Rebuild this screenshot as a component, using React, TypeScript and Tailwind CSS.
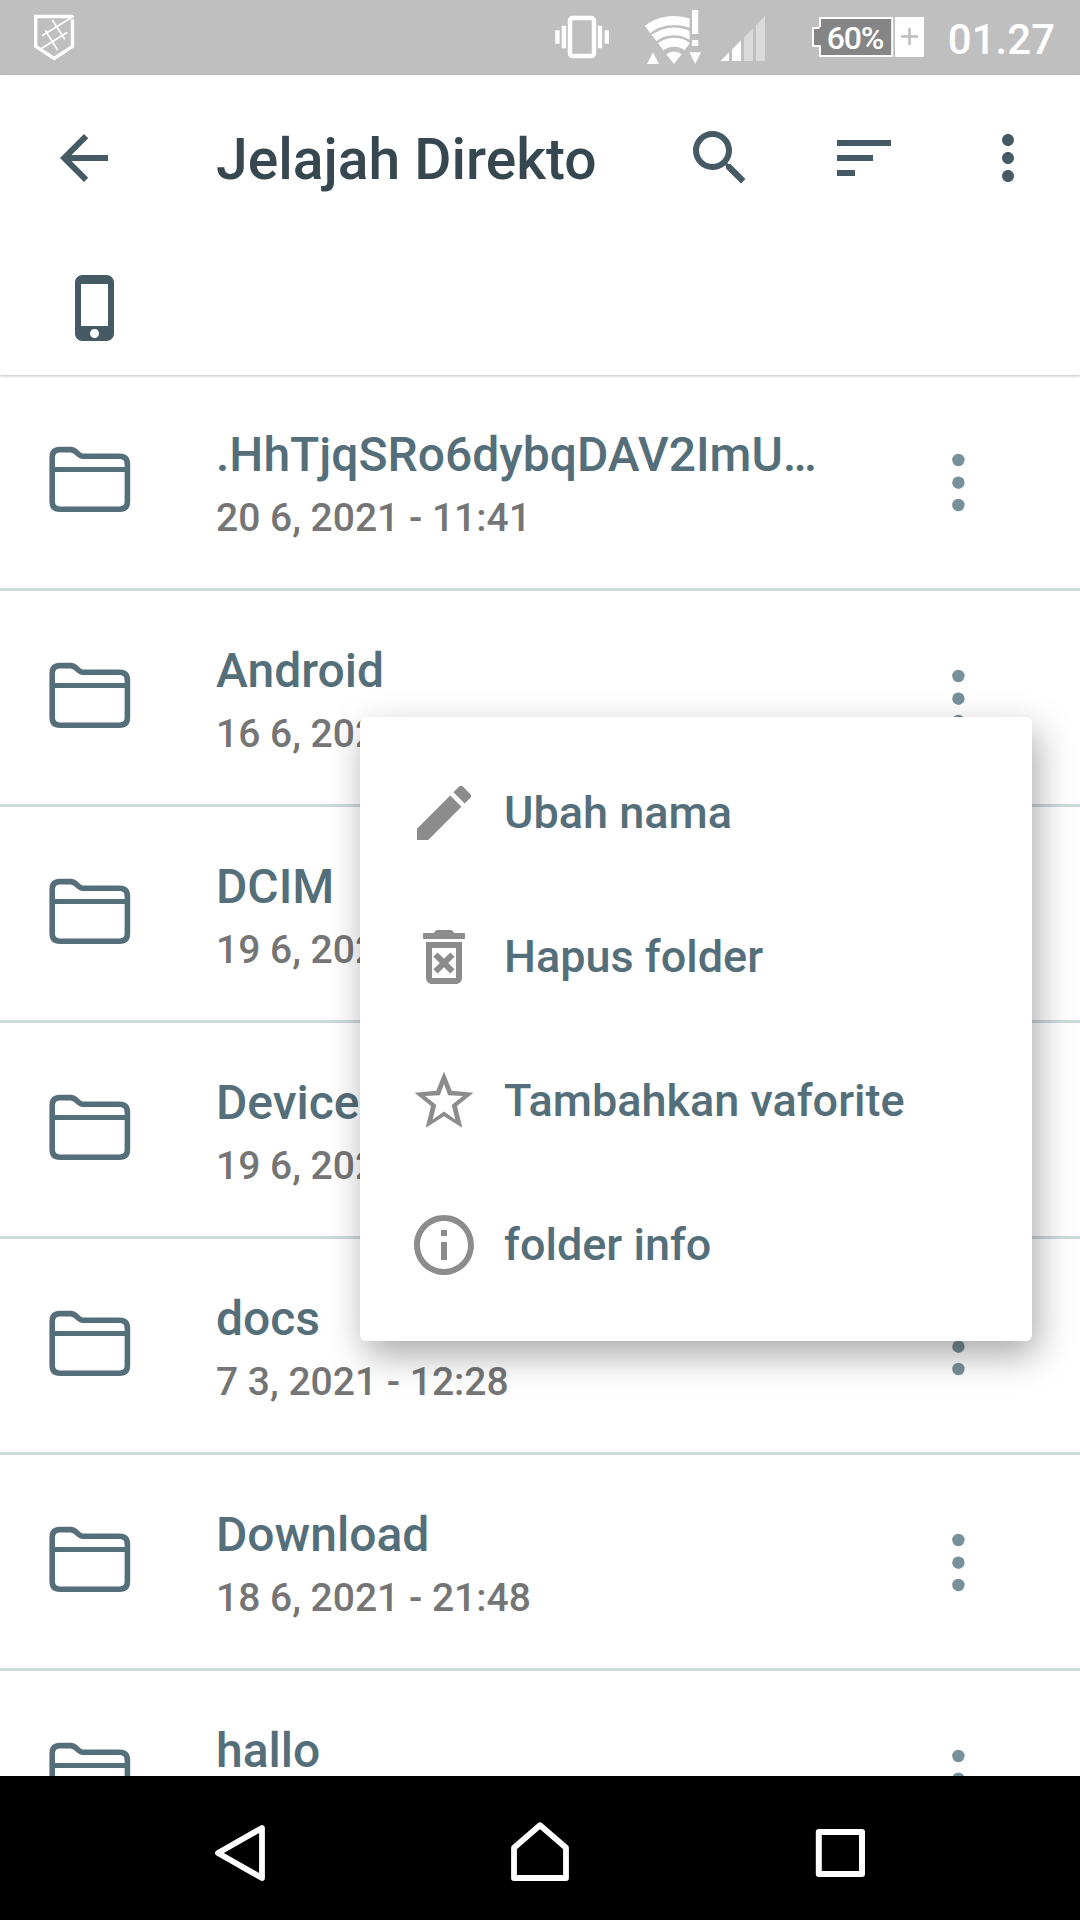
import React from "react";

const FONT = "font-['Roboto','Liberation_Sans',sans-serif]";

type Entry = { name: string; date: string };

const entries: Entry[] = [
  { name: ".HhTjqSRo6dybqDAV2ImU…", date: "20 6, 2021 - 11:41" },
  { name: "Android", date: "16 6, 2021 - 13:20" },
  { name: "DCIM", date: "19 6, 2021 - 10:05" },
  { name: "Device", date: "19 6, 2021 - 10:05" },
  { name: "docs", date: "7 3, 2021 - 12:28" },
  { name: "Download", date: "18 6, 2021 - 21:48" },
  { name: "hallo", date: "" },
];

function Icon({ d, className = "" }: { d: string; className?: string }) {
  return (
    <svg viewBox="0 0 24 24" className={`size-[72px] shrink-0 ${className}`} fill="currentColor">
      <path d={d} />
    </svg>
  );
}

const ARROW = "M20 11H7.83l5.59-5.59L12 4l-8 8 8 8 1.41-1.41L7.83 13H20v-2z";
const SEARCH =
  "M15.5 14h-.79l-.28-.27A6.471 6.471 0 0 0 16 9.5 6.5 6.5 0 1 0 9.5 16c1.61 0 3.09-.59 4.23-1.57l.27.28v.79l5 4.99L20.49 19l-4.99-5zm-6 0C7.01 14 5 11.99 5 9.5S7.01 5 9.5 5 14 7.01 14 9.5 11.99 14 9.5 14z";
const SORT = "M3 18h6v-2H3v2zM3 6v2h18V6H3zm0 7h12v-2H3v2z";
const MORE =
  "M12 8c1.1 0 2-.9 2-2s-.9-2-2-2-2 .9-2 2 .9 2 2 2zm0 2c-1.1 0-2 .9-2 2s.9 2 2 2 2-.9 2-2-.9-2-2-2zm0 6c-1.1 0-2 .9-2 2s.9 2 2 2 2-.9 2-2-.9-2-2-2z";
const PHONE =
  "M15.5 1h-8C6.12 1 5 2.12 5 3.5v17C5 21.88 6.12 23 7.5 23h8c1.38 0 2.5-1.12 2.5-2.5v-17C18 2.12 16.88 1 15.5 1zm-4 21c-.83 0-1.5-.67-1.5-1.5s.67-1.5 1.5-1.5 1.5.67 1.5 1.5-.67 1.5-1.5 1.5zm4.5-4H7V4h9v14z";
const EDIT =
  "M3 17.25V21h3.75L17.81 9.94l-3.75-3.75L3 17.25zM20.71 7.04a.996.996 0 0 0 0-1.41l-2.34-2.34a.996.996 0 0 0-1.41 0l-1.83 1.83 3.75 3.75 1.83-1.83z";
const TRASH =
  "M14.12 10.47 12 12.59l-2.13-2.12-1.41 1.41L10.59 14l-2.12 2.12 1.41 1.41L12 15.41l2.12 2.12 1.41-1.41L13.41 14l2.12-2.12-1.41-1.41zM15.5 4l-1-1h-5l-1 1H5v2h14V4h-3.5zM6 19c0 1.1.9 2 2 2h8c1.1 0 2-.9 2-2V7H6v12zM8 9h8v10H8V9z";
const INFO =
  "M11 7h2v2h-2zm0 4h2v6h-2zm1-9C6.48 2 2 6.48 2 12s4.48 10 10 10 10-4.48 10-10S17.52 2 12 2zm0 18c-4.41 0-8-3.59-8-8s3.59-8 8-8 8 3.59 8 8-3.59 8-8 8z";

function Star() {
  return (
    <svg viewBox="0 0 72 72" className="size-[72px] shrink-0" fill="currentColor" fillRule="evenodd">
      <path d="M36 6.5 43.7 25.7 65.5 27.7 49 41 54.3 62.8 36 51.3 17.7 62.8 23 41 6.5 27.7 28.3 25.7ZM36 19 31.8 30.3 17.2 31 28.3 40 24.6 54.8 36 46.6 47.4 54.8 43.7 40 54.8 31 40.2 30.3Z" />
    </svg>
  );
}

function StatusBar() {
  return (
    <header className="flex h-[75px] shrink-0 items-center justify-between bg-[#bfbfbf] pl-[34px] pr-[25px] text-white">
      <svg viewBox="34 0 42 75" className="h-[75px] w-[42px]" fill="none" stroke="#fff">
        <path d="M73 16.5H35.7V46.3L54.2 58.5 72.5 46.3V19.5" strokeWidth="3.4" />
        <path d="M74 16 42 35.7M67.5 32.3 40.6 49M52.3 20 64.7 39.3M45.3 30.3 57.5 50" strokeWidth="1.7" />
      </svg>
      <div className="flex items-center">
        <svg viewBox="552 0 220 75" className="h-[75px] w-[220px]" fill="#fff">
          <rect x="570" y="18" width="24" height="38" rx="2.5" fill="none" stroke="#fff" strokeWidth="4.4" />
          <path d="M561.8 25.8h4.4v22.4h-4.4zM555.2 30.2h4.4v13.6h-4.4zM597.8 25.8h4.4v22.4h-4.4zM604.6 30.2h4.4v13.6h-4.4z" />
          <clipPath id="wifi">
            <path d="M674 64 644.8 26 630 0H689.5V43.8Z" />
          </clipPath>
          <g clipPath="url(#wifi)">
            <g fill="none" stroke="#fff">
              <circle cx="674" cy="64" r="43.5" strokeWidth="9" />
              <circle cx="674" cy="64" r="32.6" strokeWidth="7.8" />
              <circle cx="674" cy="64" r="21.8" strokeWidth="9" />
            </g>
          </g>
          <path d="M674 64 666.4 54.2A12.4 12.4 0 0 1 681.6 54.2Z" />
          <path d="M653 52.3 659 64H647ZM689.5 52.3H701L695.2 64ZM692 10h6.2v24H692zM692 40h6.2v6H692z" />
          <path d="M720.4 61 729 52.4V61ZM732 49.4 741 40.4V61H732Z" />
          <path d="M744 37.4 753 28.3V61H744ZM756 25.2 765 16V61H756Z" fill="#dadada" />
        </svg>
        <div className="relative ml-[40px] h-[75px] w-[112px]">
          <svg viewBox="812 0 112 75" className="h-[75px] w-[112px]">
            <path d="M820 18H892.2V56H820V46H813V28H818.5L820 26Z" fill="#858585" stroke="#fff" strokeWidth="2" strokeLinejoin="round" />
            <rect x="895" y="17" width="29" height="40" rx="1" fill="#fff" />
            <path d="M909.5 28V45M901 36.5H918" stroke="#bfbfbf" strokeWidth="2.6" />
          </svg>
          <span className="absolute top-[20px] left-[15px] text-[32px] leading-[36px] font-medium tracking-[-1.2px]">60%</span>
        </div>
        <span className="mt-[3px] ml-[24px] text-[42px] leading-[75px] font-medium">01.27</span>
      </div>
    </header>
  );
}

function FolderRow({ name, date }: Entry) {
  return (
    <li className="flex h-[216px] shrink-0 border-b-[3px] border-[#cfd8dc] pl-[48px]">
      <svg viewBox="48 446 84 68" className="mt-[71px] h-[68px] w-[84px]" fill="none" stroke="#546e7a" strokeWidth="5.6">
        <path d="M60 449.6H70.5C77 449.6 77.5 456.2 83 456.2H119.5Q127.4 456.2 127.4 464V501.5Q127.4 509.2 119.5 509.2H60Q52.2 509.2 52.2 501.5V457.5Q52.2 449.6 60 449.6Z" />
        <path d="M53 469.5H127" strokeWidth="5" />
      </svg>
      <div className="ml-[84px] w-[620px] pt-[52px] font-medium whitespace-nowrap">
        <p className="text-[48px] leading-[56px] text-[#546e7a]">{name}</p>
        {date && <p className="mt-[12px] text-[39px] leading-[46px] text-[#757575]">{date}</p>}
      </div>
      <svg viewBox="0 0 16 72" className="mt-[71px] ml-[114px] h-[72px] w-[16px]" fill="#78909c">
        <circle cx="8.4" cy="14" r="6.2" />
        <circle cx="8.4" cy="36.7" r="6.2" />
        <circle cx="8.4" cy="59" r="6.2" />
      </svg>
    </li>
  );
}

function ContextMenu() {
  const items = [
    { label: "Ubah nama", icon: <Icon d={EDIT} /> },
    { label: "Hapus folder", icon: <Icon d={TRASH} /> },
    { label: "Tambahkan vaforite", icon: <Star /> },
    { label: "folder info", icon: <Icon d={INFO} /> },
  ];
  return (
    <ul className="absolute left-[360px] top-[717px] w-[672px] rounded-[6px] bg-white py-6 shadow-[5px_14px_36px_rgba(0,0,0,0.34)]">
      {items.map((it) => (
        <li key={it.label} className="flex h-[144px] items-center gap-6 pl-12 text-[#8c8c8c]">
          {it.icon}
          <span className="text-[45px] leading-[54px] font-medium text-[#546e7a]">{it.label}</span>
        </li>
      ))}
    </ul>
  );
}

function NavBar() {
  return (
    <nav className="flex h-[144px] shrink-0 items-center justify-between bg-black px-[190px]">
      <svg viewBox="190 1776 100 144" className="h-[144px] w-[100px]" fill="none" stroke="#fff" strokeWidth="5.8" strokeLinejoin="round">
        <path d="M262 1828V1878L218 1853Z" />
      </svg>
      <svg viewBox="490 1776 100 144" className="h-[144px] w-[100px]" fill="none" stroke="#fff" strokeWidth="5.8" strokeLinejoin="round">
        <path d="M514 1878V1847.8L540 1825.3 566 1847.8V1878Z" />
      </svg>
      <svg viewBox="790 1776 100 144" className="h-[144px] w-[100px]" fill="none" stroke="#fff" strokeWidth="6" strokeLinejoin="round">
        <path d="M818.8 1832H862V1874H818.8Z" />
      </svg>
    </nav>
  );
}

export default function App() {
  return (
    <div className={`relative flex h-[1920px] w-[1080px] flex-col overflow-hidden bg-white ${FONT}`}>
      <StatusBar />
      <div className="z-[1] h-[300px] shrink-0 bg-white text-[#455a64] shadow-[0_1px_3px_rgba(0,0,0,0.25)]">
        <div className="flex h-[166px] items-center pr-9 pl-12">
          <Icon d={ARROW} />
          <h1 className="ml-24 w-[468px] pt-[4px] text-[57px] leading-[72px] font-medium whitespace-nowrap text-[#37474f]">Jelajah Direkto</h1>
          <Icon d={SEARCH} />
          <Icon d={SORT} className="ml-[72px]" />
          <Icon d={MORE} className="ml-[72px]" />
        </div>
        <div className="pt-[31px] pl-[60px]">
          <Icon d={PHONE} />
        </div>
      </div>
      <ul className="flex min-h-0 flex-1 flex-col overflow-hidden">
        {entries.map((e) => (
          <FolderRow key={e.name} {...e} />
        ))}
      </ul>
      <NavBar />
      <ContextMenu />
    </div>
  );
}
